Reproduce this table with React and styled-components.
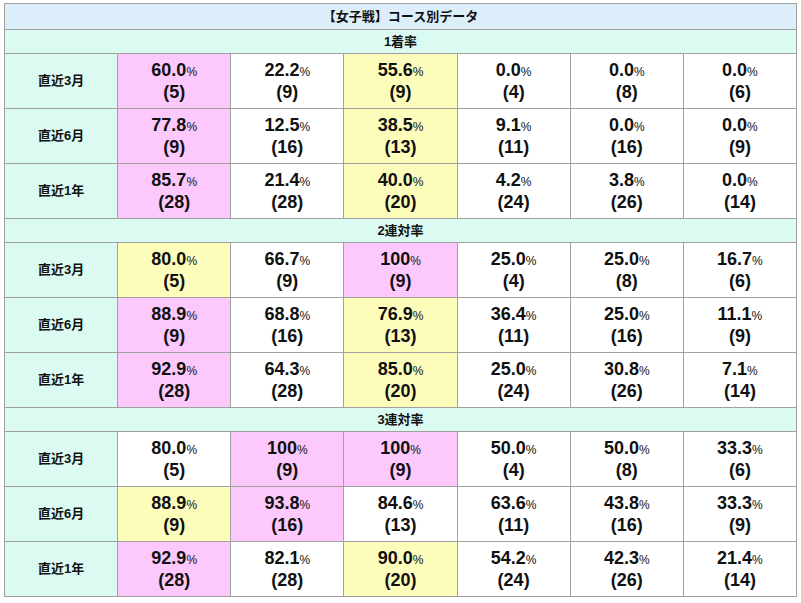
import React from "react";
import styled, { createGlobalStyle } from "styled-components";

const GlobalStyle = createGlobalStyle`
  body {
    margin: 0;
    background: #ffffff;
    font-family: "Liberation Sans", "Noto Sans CJK JP", sans-serif;
    color: #111;
  }
`

const Page = styled.div`
  padding: 3px 4px;
`
const Table = styled.table`
  width: 793px;
  border-collapse: collapse;
  table-layout: fixed;
  text-align: center;
`
const Row = styled.tr`
  height: ${(p) => p.$h}px;
`
const Cell = styled.td`
  border: 1px solid #a0a0a0;
  font-weight: bold;
  padding: 0;
  vertical-align: middle;
`
const TitleCell = styled(Cell)`
  background: #ddeefb;
  font-size: 13px;
  line-height: 16px;
`
const SectionCell = styled(Cell)`
  background: #dbfbf2;
  font-size: 13px;
  line-height: 16px;
`
const LabelCell = styled(Cell)`
  background: #dbfbf2;
  font-size: 13px;
  line-height: 16px;
`
const tones = {
  pink: "#fdc9fd",
  yellow: "#fdfdbb",
  none: "#ffffff",
};
const ValueCell = styled(Cell)`
  background: ${(p) => tones[p.$tone || "none"]};
  font-size: 18px;
  line-height: 22px;
`
const Pct = styled.span`
  font-size: 12px;
  font-weight: normal;
  line-height: 1;
`

const sections = [
  {
    name: "1着率",
    rows: [
      ["直近3月", [["60.0", 5, "pink"], ["22.2", 9], ["55.6", 9, "yellow"], ["0.0", 4], ["0.0", 8], ["0.0", 6]]],
      ["直近6月", [["77.8", 9, "pink"], ["12.5", 16], ["38.5", 13, "yellow"], ["9.1", 11], ["0.0", 16], ["0.0", 9]]],
      ["直近1年", [["85.7", 28, "pink"], ["21.4", 28], ["40.0", 20, "yellow"], ["4.2", 24], ["3.8", 26], ["0.0", 14]]],
    ],
  },
  {
    name: "2連対率",
    rows: [
      ["直近3月", [["80.0", 5, "yellow"], ["66.7", 9], ["100", 9, "pink"], ["25.0", 4], ["25.0", 8], ["16.7", 6]]],
      ["直近6月", [["88.9", 9, "pink"], ["68.8", 16], ["76.9", 13, "yellow"], ["36.4", 11], ["25.0", 16], ["11.1", 9]]],
      ["直近1年", [["92.9", 28, "pink"], ["64.3", 28], ["85.0", 20, "yellow"], ["25.0", 24], ["30.8", 26], ["7.1", 14]]],
    ],
  },
  {
    name: "3連対率",
    rows: [
      ["直近3月", [["80.0", 5], ["100", 9, "pink"], ["100", 9, "pink"], ["50.0", 4], ["50.0", 8], ["33.3", 6]]],
      ["直近6月", [["88.9", 9, "yellow"], ["93.8", 16, "pink"], ["84.6", 13], ["63.6", 11], ["43.8", 16], ["33.3", 9]]],
      ["直近1年", [["92.9", 28, "pink"], ["82.1", 28], ["90.0", 20, "yellow"], ["54.2", 24], ["42.3", 26], ["21.4", 14]]],
    ],
  },
];

export default function App() {
  return (
    <Page>
      <GlobalStyle />
      <Table>
        <tbody>
          <Row $h={26}>
            <TitleCell colSpan={7}>【女子戦】コース別データ</TitleCell>
          </Row>
          {sections.map((sec) => (
            <React.Fragment key={sec.name}>
              <Row $h={24}>
                <SectionCell colSpan={7}>{sec.name}</SectionCell>
              </Row>
              {sec.rows.map(([label, vals]) => (
                <Row $h={55} key={label}>
                  <LabelCell>{label}</LabelCell>
                  {vals.map(([rate, count, tone], i) => (
                    <ValueCell key={i} $tone={tone}>
                      {rate}
                      <Pct>%</Pct>
                      <br />({count})
                    </ValueCell>
                  ))}
                </Row>
              ))}
            </React.Fragment>
          ))}
        </tbody>
      </Table>
    </Page>
  );
}
